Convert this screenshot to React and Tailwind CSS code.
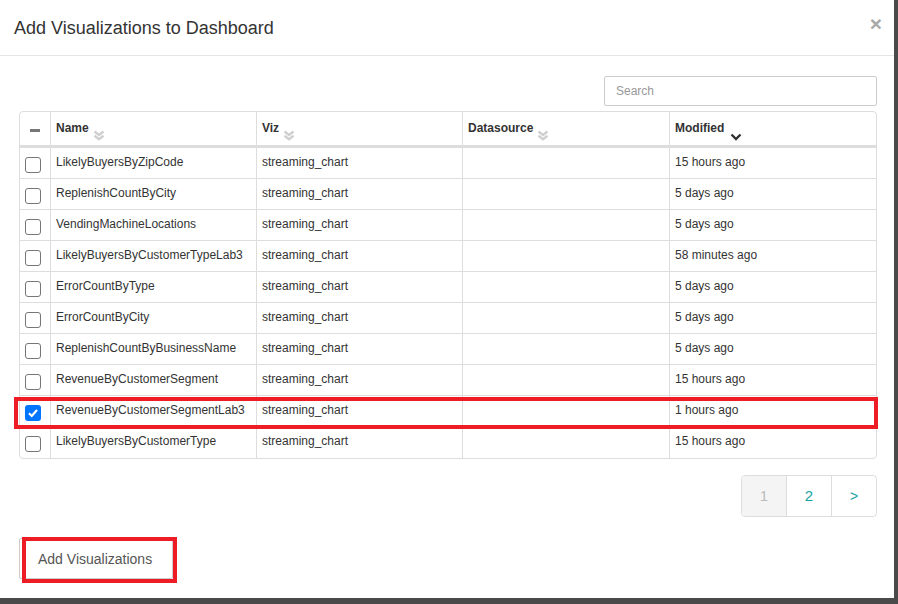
import React from "react";

const rows = [
  ["LikelyBuyersByZipCode", "streaming_chart", "", "15 hours ago", false],
  ["ReplenishCountByCity", "streaming_chart", "", "5 days ago", false],
  ["VendingMachineLocations", "streaming_chart", "", "5 days ago", false],
  ["LikelyBuyersByCustomerTypeLab3", "streaming_chart", "", "58 minutes ago", false],
  ["ErrorCountByType", "streaming_chart", "", "5 days ago", false],
  ["ErrorCountByCity", "streaming_chart", "", "5 days ago", false],
  ["ReplenishCountByBusinessName", "streaming_chart", "", "5 days ago", false],
  ["RevenueByCustomerSegment", "streaming_chart", "", "15 hours ago", false],
  ["RevenueByCustomerSegmentLab3", "streaming_chart", "", "1 hours ago", true],
  ["LikelyBuyersByCustomerType", "streaming_chart", "", "15 hours ago", false],
];

function SortIcon() {
  return (
    <svg width="12" height="11" viewBox="0 0 12 11" className="inline-block ml-[4px] translate-y-[7px]">
      <path d="M1.5 1.5 L6 5 L10.5 1.5" fill="none" stroke="#cfcfcf" strokeWidth="2.4" />
      <path d="M1.5 5.8 L6 9.3 L10.5 5.8" fill="none" stroke="#cfcfcf" strokeWidth="2.4" />
    </svg>
  );
}

function DownIcon() {
  return (
    <svg width="12" height="8" viewBox="0 0 12 8" className="inline-block ml-[6px] translate-y-[8px]">
      <path d="M1.5 1.5 L6 6 L10.5 1.5" fill="none" stroke="#333" strokeWidth="2.4" />
    </svg>
  );
}

function Checkbox({ checked }) {
  if (checked) {
    return (
      <div className="w-[16px] h-[16px] rounded-[3px] bg-[#0075ff] flex items-center justify-center">
        <svg width="12" height="12" viewBox="0 0 12 12">
          <path d="M2 6.3 L4.8 9 L10 3" fill="none" stroke="white" strokeWidth="2.2" />
        </svg>
      </div>
    );
  }
  return <div className="w-[16px] h-[16px] rounded-[3px] border border-[#767676] bg-white" />;
}

export default function App() {
  return (
    <div
      className="w-[898px] h-[604px] bg-[#4a4a4a] overflow-hidden"
      style={{ fontFamily: '"Liberation Sans", Arial, sans-serif' }}
    >
      <div className="relative w-[894px] h-[598px] bg-white text-[#333]">
        {/* header */}
        <div className="h-[56px] border-b border-[#e5e5e5] flex items-center justify-between pl-[14px] pr-[12px]">
          <div className="text-[18px] leading-[20px]">Add Visualizations to Dashboard</div>
          <div className="text-[21px] font-bold text-[#a8a8a8] leading-none -mt-[9px]">×</div>
        </div>

        {/* body */}
        <div className="pl-[19px] pr-[17px] pt-[20px]">
          <div className="flex justify-end">
            <div className="w-[273px] h-[30px] border border-[#ccc] rounded-[2px] flex items-center pl-[11px] text-[12px] text-[#999]">
              Search
            </div>
          </div>

          <div className="mt-[5px] border border-[#ddd] rounded-[4px] overflow-hidden text-[12px]">
            {/* header row */}
            <div className="flex h-[36px] border-b-[3px] border-[#ddd] font-bold">
              <div className="w-[31px] border-r border-[#ddd] flex justify-center pt-[17px]">
                <div className="w-[10px] h-[3px] bg-[#777]" />
              </div>
              <div className="w-[206px] border-r border-[#ddd] pl-[5px] pt-[8px] leading-[17px]">
                Name<SortIcon />
              </div>
              <div className="w-[206px] border-r border-[#ddd] pl-[5px] pt-[8px] leading-[17px]">
                Viz<SortIcon />
              </div>
              <div className="w-[207px] border-r border-[#ddd] pl-[5px] pt-[8px] leading-[17px]">
                Datasource<SortIcon />
              </div>
              <div className="flex-1 pl-[5px] pt-[8px] leading-[17px]">
                Modified<DownIcon />
              </div>
            </div>
            {rows.map((r, i) => (
              <div
                key={i}
                className={"flex h-[31px] " + (i < rows.length - 1 ? "border-b border-[#ddd]" : "")}
              >
                <div className="w-[31px] border-r border-[#ddd] pl-[5px] pt-[9px]">
                  <Checkbox checked={r[4]} />
                </div>
                <div className="w-[206px] border-r border-[#ddd] pl-[5px] pt-[6px] leading-[17px]">{r[0]}</div>
                <div className="w-[206px] border-r border-[#ddd] pl-[5px] pt-[6px] leading-[17px]">{r[1]}</div>
                <div className="w-[207px] border-r border-[#ddd] pl-[5px] pt-[6px] leading-[17px]">{r[2]}</div>
                <div className="flex-1 pl-[5px] pt-[6px] leading-[17px]">{r[3]}</div>
              </div>
            ))}
          </div>

          {/* pagination */}
          <div className="flex justify-end mt-[16px]">
            <div className="flex h-[42px] border border-[#ddd] rounded-[4px] overflow-hidden text-[15px]">
              <div className="w-[45px] bg-[#f4f4f4] text-[#bbb] flex items-center justify-center border-r border-[#ddd]">1</div>
              <div className="w-[45px] text-[#17a2a2] flex items-center justify-center border-r border-[#ddd]">2</div>
              <div className="w-[44px] text-[#17a2a2] flex items-center justify-center text-[14px]">&gt;</div>
            </div>
          </div>

          {/* add button */}
          <div className="mt-[21px]">
            <div className="w-[154px] h-[41px] border border-[#ccc] rounded-[2px] flex items-center pl-[18px] pt-[2px] text-[14px] text-[#555]">
              Add Visualizations
            </div>
          </div>
        </div>

        {/* red annotation boxes */}
        <div className="absolute left-[14px] top-[397px] w-[864px] h-[32px] border-[4px] border-[#ee1c25]" />
        <div className="absolute left-[22px] top-[537px] w-[155px] h-[46px] border-[4px] border-[#ee1c25]" />
      </div>
    </div>
  );
}
